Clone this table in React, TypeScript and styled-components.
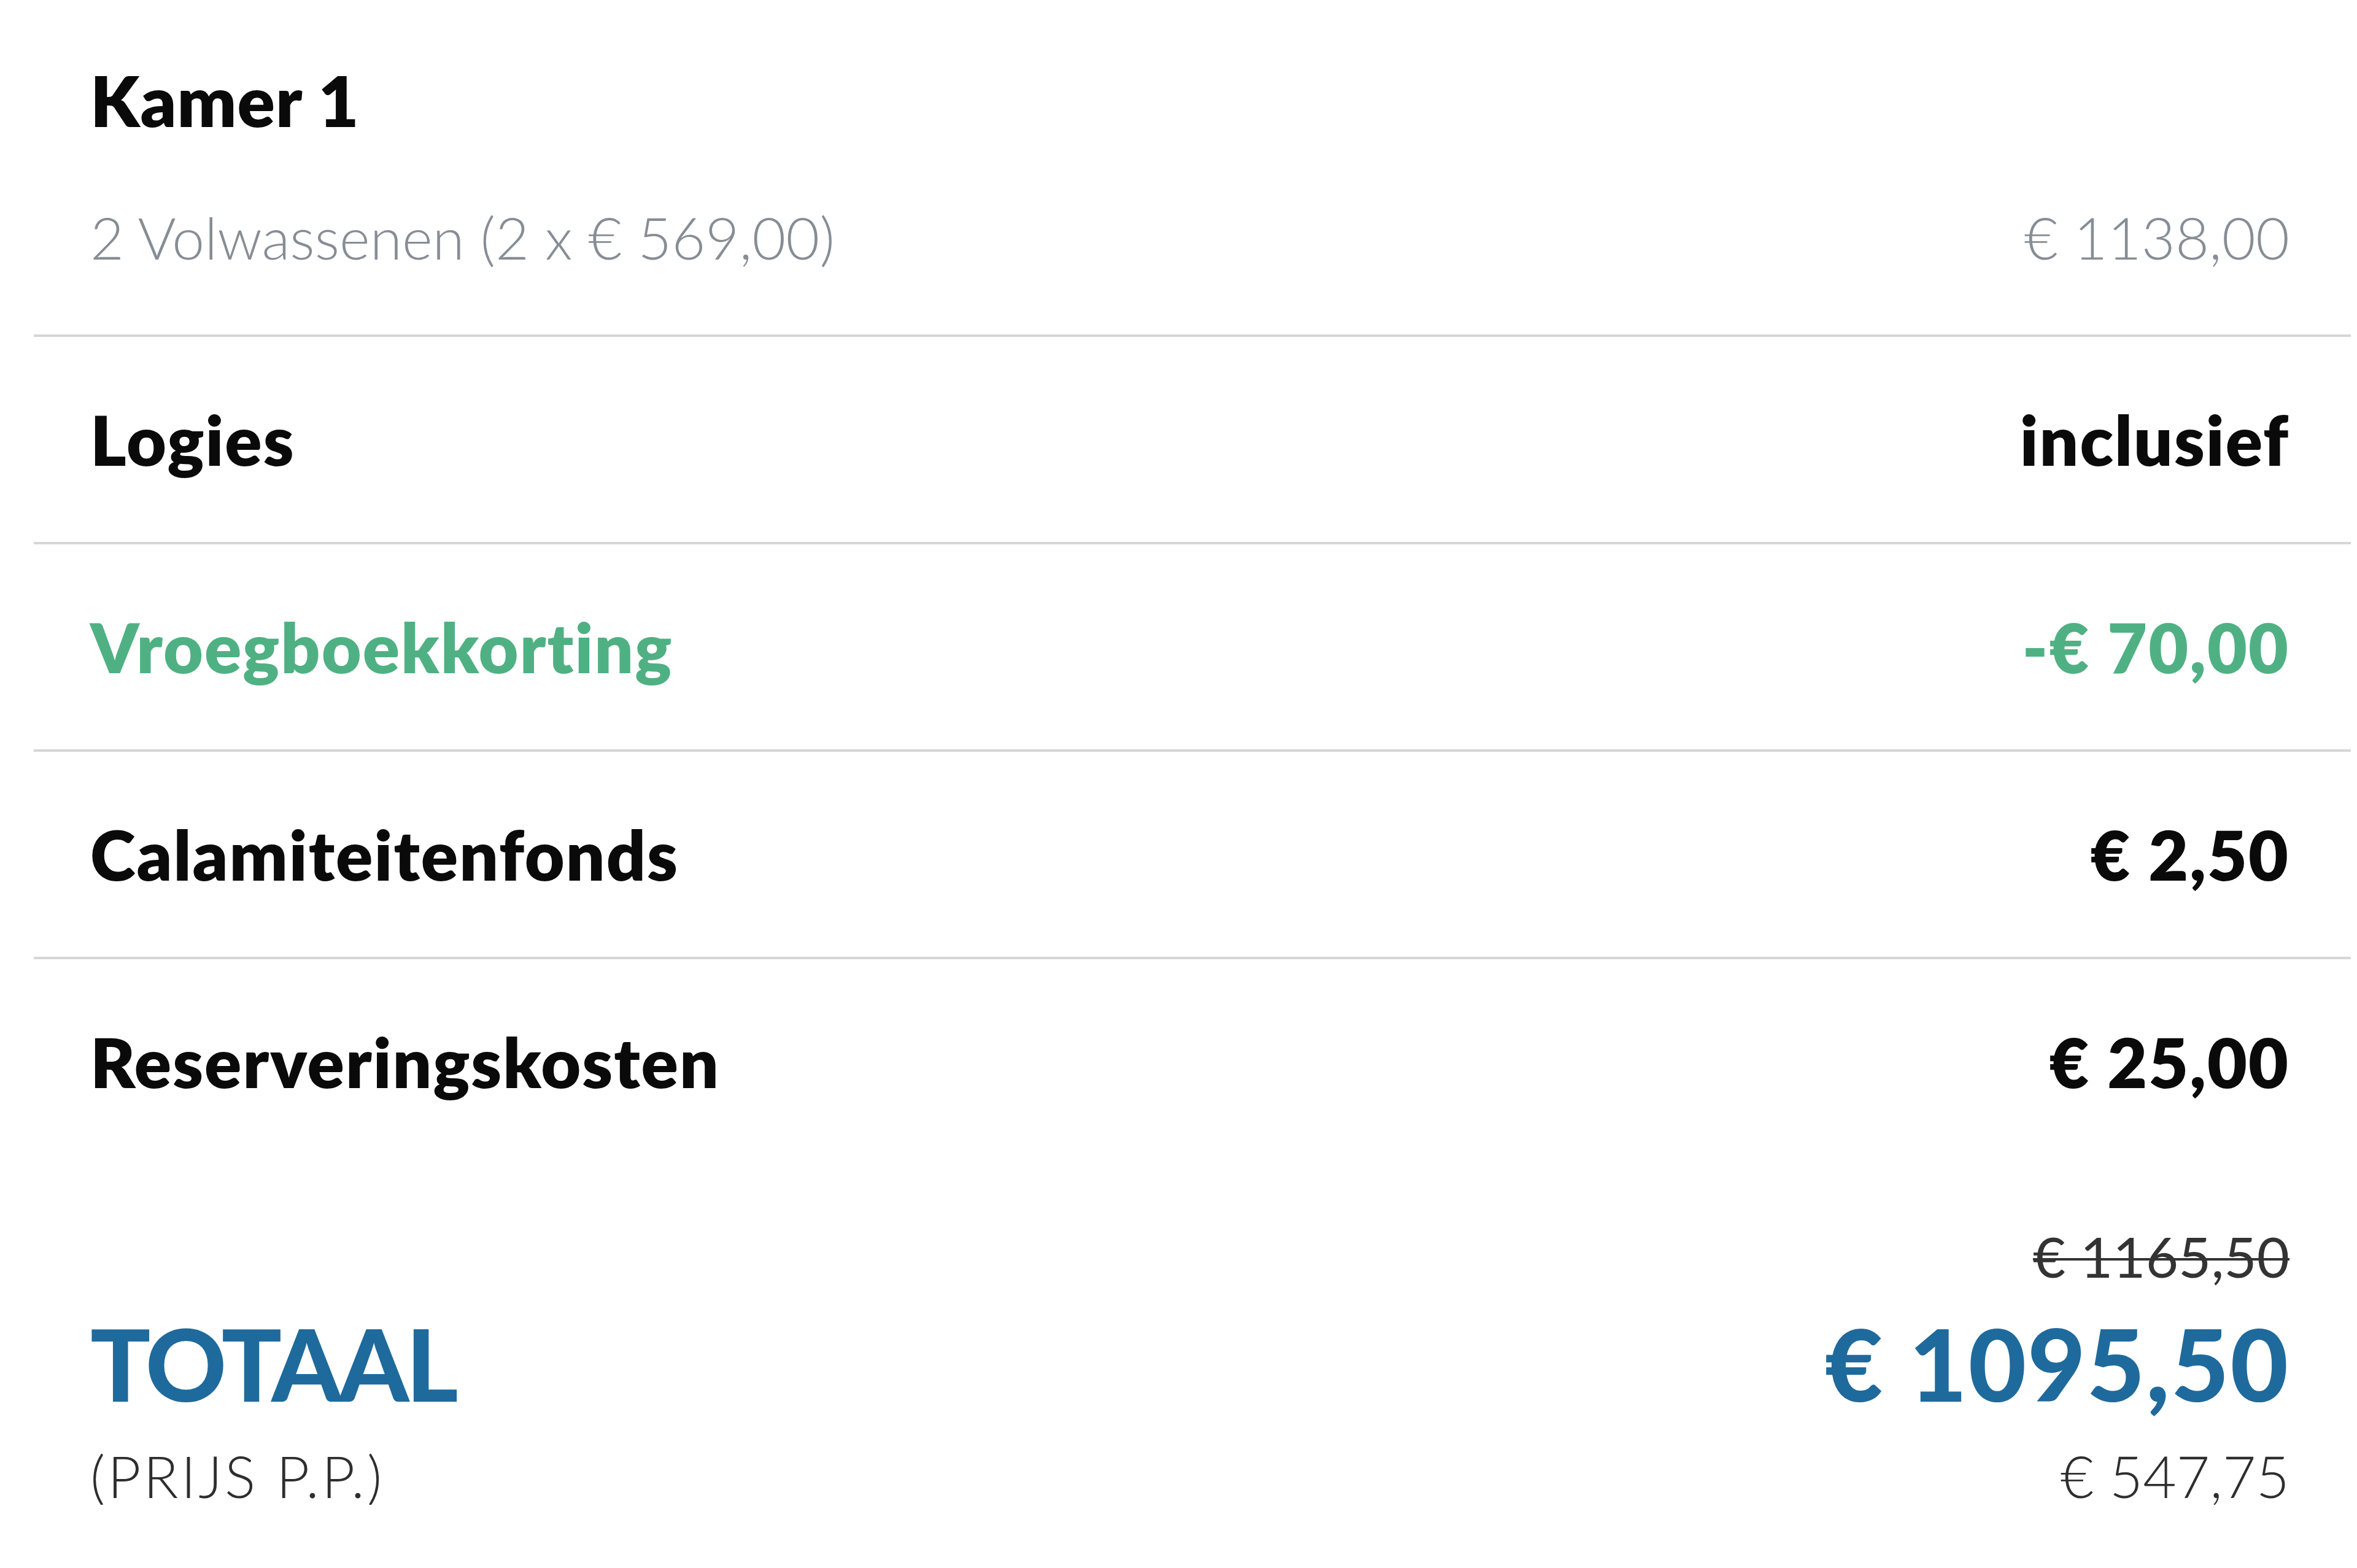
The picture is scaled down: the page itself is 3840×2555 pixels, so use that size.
import React from "react";
import styled, { createGlobalStyle } from "styled-components";

const GlobalStyle = createGlobalStyle`
  html, body {
    margin: 0;
    padding: 0;
    background: #ffffff;
  }
  body {
    font-family: Lato, "Source Sans Pro", "Liberation Sans", sans-serif;
    -webkit-font-smoothing: antialiased;
  }
`;

const Summary = styled.section`
  display: flex;
  flex-direction: column;
  padding: 0 10px 0 55px;
  width: 3840px;
  box-sizing: border-box;
`;

const RoomHeader = styled.div`
  display: flex;
  flex-direction: column;
  padding: 106px 100px 111px 92px;
  gap: 119px;
  border-bottom: 4px solid #d6d6d6;
`;

const RoomTitle = styled.div`
  font-size: 114px;
  line-height: 1;
  font-weight: 800;
  letter-spacing: 1px;
  color: #0a0a0a;
`;

const SubRow = styled.div`
  display: flex;
  justify-content: space-between;
  align-items: baseline;
  font-size: 95px;
  line-height: 1;
  font-weight: 300;
  color: #878d95;
`;

const Row = styled.div<{ $last?: boolean }>`
  display: flex;
  justify-content: space-between;
  align-items: center;
  height: 334px;
  padding: 0 100px 0 92px;
  border-bottom: ${(p) => (p.$last ? "none" : "4px solid #d6d6d6")};
`;

const RowText = styled.span<{ $tone?: "default" | "discount" }>`
  font-size: 112px;
  line-height: 1;
  font-weight: 800;
  letter-spacing: 2px;
  color: ${(p) => (p.$tone === "discount" ? "#4fb183" : "#0a0a0a")};
`;

const Totals = styled.div`
  display: grid;
  grid-template-columns: 1fr auto;
  grid-template-rows: auto auto auto;
  padding: 104px 100px 0 92px;
`;

const OldPrice = styled.div`
  grid-column: 2;
  grid-row: 1;
  justify-self: end;
  font-size: 92px;
  line-height: 1;
  font-weight: 400;
  color: #333333;
  text-decoration: line-through;
  text-decoration-thickness: 4px;
  margin-bottom: 47px;
`;

const TotalLabel = styled.div`
  grid-column: 1;
  grid-row: 2;
  font-size: 163px;
  line-height: 1;
  font-weight: 900;
  letter-spacing: -5px;
  color: #1f6a9c;
`;

const TotalPrice = styled.div`
  grid-column: 2;
  grid-row: 2;
  justify-self: end;
  font-size: 163px;
  line-height: 1;
  font-weight: 900;
  letter-spacing: 2px;
  color: #1f6a9c;
`;

const SmallNote = styled.div<{ $col: number }>`
  grid-column: ${(p) => p.$col};
  grid-row: 3;
  justify-self: ${(p) => (p.$col === 2 ? "end" : "start")};
  margin-top: 55px;
  font-size: 94px;
  line-height: 1;
  font-weight: 300;
  letter-spacing: ${(p) => (p.$col === 1 ? "4px" : "0")};
  color: #2e2e2e;
`;

type Line = { label: string; value: string; tone?: "default" | "discount" };

const lines: Line[] = [
  { label: "Logies", value: "inclusief" },
  { label: "Vroegboekkorting", value: "-€ 70,00", tone: "discount" },
  { label: "Calamiteitenfonds", value: "€ 2,50" },
  { label: "Reserveringskosten", value: "€ 25,00" },
];

export default function App() {
  return (
    <>
      <GlobalStyle />
      <Summary>
        <RoomHeader>
          <RoomTitle>Kamer 1</RoomTitle>
          <SubRow>
            <span>2 Volwassenen (2 x € 569,00)</span>
            <span>€ 1138,00</span>
          </SubRow>
        </RoomHeader>
        {lines.map((l, i) => (
          <Row key={l.label} $last={i === lines.length - 1}>
            <RowText $tone={l.tone}>{l.label}</RowText>
            <RowText $tone={l.tone}>{l.value}</RowText>
          </Row>
        ))}
        <Totals>
          <OldPrice>€ 1165,50</OldPrice>
          <TotalLabel>TOTAAL</TotalLabel>
          <TotalPrice>€ 1095,50</TotalPrice>
          <SmallNote $col={1}>(PRIJS P.P.)</SmallNote>
          <SmallNote $col={2}>€ 547,75</SmallNote>
        </Totals>
      </Summary>
    </>
  );
}
